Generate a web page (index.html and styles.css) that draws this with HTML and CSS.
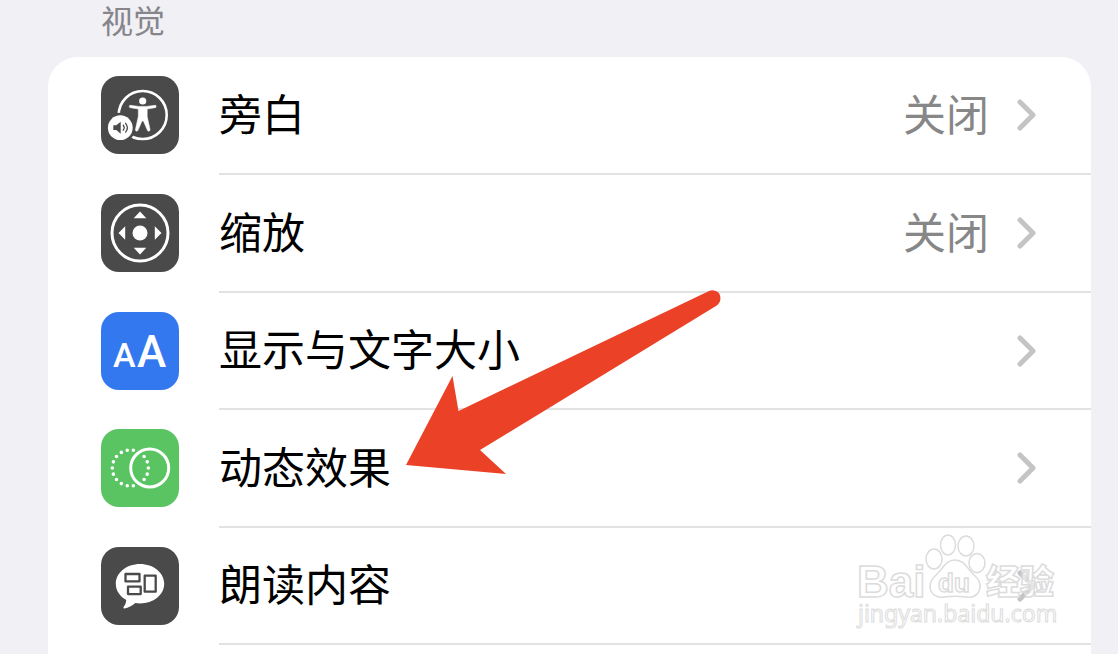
FILE: index.html
```html
<!DOCTYPE html>
<html lang="zh-CN">
<head>
<meta charset="utf-8">
<title>辅助功能</title>
<link rel="stylesheet" href="styles.css">
</head>
<body>
<main class="page">
  <h2 class="section-title">视觉</h2>
  <nav class="card">
    <a class="row" href="#voiceover">
      <svg class="icon icon-dark" viewBox="0 0 78 78" aria-hidden="true">
        <circle cx="41.7" cy="39" r="24" fill="none" stroke="#fff" stroke-width="2.6"/>
        <circle cx="19.3" cy="51.7" r="15" fill="#4a4a4a"/>
        <circle cx="19.3" cy="51.7" r="12.4" fill="#fff"/>
        <path d="M12.3 49.3h3l4.4-3.6v12l-4.4-3.6h-3z" fill="#4a4a4a"/>
        <path d="M22.2 49.2q2 2.5 0 5M24.6 47.3q3.6 4.4 0 8.8" fill="none" stroke="#4a4a4a" stroke-width="1.3" stroke-linecap="round"/>
        <circle cx="41.7" cy="25" r="3.6" fill="#fff"/>
        <path d="M29.3 29.3 38 30.4h7.4l8.7-1.1q1.2.1 1.1 1.2t-1 1.2l-8 1.3v7.6l2.9 13q0 1.5-1.3 1.6t-1.5-1.1L42.4 45h-1.4L37.1 54.100q-.5 1.2-1.6 1.1t-1.1-1.6l2.9-13V33l-8-1.3q-1-.2-1-1.3t1-1.1z" fill="#fff" stroke="#fff" stroke-width=".5"/>
      </svg>
      <span class="body"><span class="label">旁白</span><span class="value">关闭</span>
      <svg class="chevron" viewBox="0 0 20 32" aria-hidden="true"><path d="M3 3 16 16 3 29"/></svg></span>
    </a>
    <a class="row" href="#zoom">
      <svg class="icon icon-dark" viewBox="0 0 78 78" aria-hidden="true">
        <circle cx="39" cy="39" r="28" fill="none" stroke="#fff" stroke-width="3"/>
        <circle cx="39" cy="39" r="7.5" fill="#fff"/>
        <path d="M39 17.500 45.300 24.200H32.700zM39 60.500 32.700 53.800h12.600zM17.500 39 24.200 32.300v13.400zM60.500 39 53.800 32.300v13.400z" fill="#fff"/>
      </svg>
      <span class="body"><span class="label">缩放</span><span class="value">关闭</span>
      <svg class="chevron" viewBox="0 0 20 32" aria-hidden="true"><path d="M3 3 16 16 3 29"/></svg></span>
    </a>
    <a class="row" href="#display">
      <svg class="icon icon-blue" viewBox="0 0 78 78" aria-hidden="true">
        <text class="glyph glyph-small" x="12" y="55">A</text>
        <text class="glyph glyph-large" x="36" y="55">A</text>
      </svg>
      <span class="body"><span class="label">显示与文字大小</span>
      <svg class="chevron" viewBox="0 0 20 32" aria-hidden="true"><path d="M3 3 16 16 3 29"/></svg></span>
    </a>
    <a class="row" href="#motion">
      <svg class="icon icon-green" viewBox="0 0 78 78" fill="none" aria-hidden="true">
        <circle cx="29.3" cy="39" r="18" stroke="#fff" stroke-width="3.6" stroke-linecap="round" pathLength="18" stroke-dasharray="0 1"/>
        <circle cx="48.7" cy="39" r="19" stroke="#5ac463" stroke-width="6"/>
        <circle cx="48.7" cy="39" r="19" stroke="#fff" stroke-width="3"/>
      </svg>
      <span class="body"><span class="label">动态效果</span>
      <svg class="chevron" viewBox="0 0 20 32" aria-hidden="true"><path d="M3 3 16 16 3 29"/></svg></span>
    </a>
    <a class="row" href="#spoken">
      <svg class="icon icon-dark" viewBox="0 0 78 78" aria-hidden="true">
        <path d="M39 17c13.500 0 24.200 8.700 24.200 19.800S52.500 56.500 39 56.500q-2.500 0-4.700-.4-5 4.400-10.800 5.400-1.700 0-.9-1.500 2.500-3.500 2.700-7C18.800 49.500 14.800 43.600 14.800 36.800 14.800 25.700 25.500 17 39 17z" fill="#fff"/>
        <g fill="#fff" stroke="#4a4a4a" stroke-width="2.3" stroke-linejoin="round">
          <rect x="24.500" y="27" width="14" height="7.400"/>
          <rect x="27" y="39.700" width="12.700" height="7.400"/>
          <rect x="43.700" y="28.700" width="11" height="16"/>
        </g>
      </svg>
      <span class="body"><span class="label">朗读内容</span>
      <svg class="chevron" viewBox="0 0 20 32" aria-hidden="true"><path d="M3 3 16 16 3 29"/></svg></span>
    </a>
  </nav>

  <svg class="arrow" viewBox="0 0 316 186" aria-hidden="true">
    <path d="M1 176 47.500 87 53.500 122 303 2.500Q309-.5 314 4 318 12 311 17L75 161 101 185z" fill="#eb4127"/>
  </svg>

  <svg class="watermark" viewBox="0 0 206 104" role="img" aria-label="Baidu 经验 jingyan.baidu.com">
    <g class="outline">
      <ellipse cx="79" cy="29" rx="8" ry="10"/>
      <ellipse cx="93" cy="15" rx="7.500" ry="10"/>
      <ellipse cx="111" cy="16" rx="8" ry="10"/>
      <ellipse cx="122" cy="33" rx="8" ry="9.500"/>
      <path d="M100 30c9 0 12 8 18 14 6 5 8 9 7 14-2 8-8 10-14 9-7-1-14-1-22 0-7 1-13-2-14-10 0-6 3-9 8-14 6-6 8-13 17-13z"/>
      <text class="mark-latin" x="2" y="67">Bai</text>
      <text class="mark-du" x="83" y="62">du</text>
      <text class="mark-cjk" x="131" y="64">经验</text>
      <text class="mark-url" x="3" y="92">jingyan.baidu.com</text>
    </g>
  </svg>
</main>
</body>
</html>
```
FILE: styles.css
```css
* {
  box-sizing: border-box;
}

body {
  margin: 0;
  background: #f1f0f5;
  color: #000;
  font-family: "Noto Sans CJK SC", sans-serif;
}

.page {
  position: relative;
  display: flex;
  flex-direction: column;
  min-height: 100vh;
  padding: 0 27px 0 48px;
  overflow: hidden;
}

.section-title {
  margin: 0;
  padding: 0 53px 19px;
  color: #85858a;
  font-size: 32px;
  font-weight: 400;
  line-height: 38px;
}

.card {
  flex: 1;
  background: #fff;
  border-radius: 30px 30px 0 0;
}

.row {
  display: flex;
  align-items: stretch;
  gap: 40px;
  min-height: 118px;
  padding-left: 53px;
  color: inherit;
  text-decoration: none;
}

.row:nth-child(3),
.row:nth-child(5) {
  min-height: 117px;
}

.icon {
  flex: none;
  width: 78px;
  height: 78px;
  margin: 19px 0;
  border-radius: 18px;
}

.icon-dark {
  background: #4a4a4a;
}

.icon-blue {
  background: #3478f0;
}

.icon-green {
  background: #5ac463;
}

.glyph {
  fill: #fff;
  font-family: Roboto, sans-serif;
  font-weight: 500;
}

.glyph-small {
  font-size: 34px;
}

.glyph-large {
  font-size: 44px;
}

.body {
  flex: 1;
  display: flex;
  align-items: center;
  padding-right: 54px;
  border-bottom: 2px solid #e2e2e3;
  font-size: 43px;
  line-height: 60px;
}

.label,
.value {
  padding-bottom: 7px;
}

.label {
  flex: 1;
}

.value {
  color: #878787;
}

.chevron {
  flex: none;
  width: 20px;
  height: 32px;
  margin-left: 28px;
  fill: none;
  stroke: #c4c4c6;
  stroke-width: 5;
  stroke-linecap: round;
  stroke-linejoin: round;
}

.arrow {
  position: absolute;
  top: 289px;
  left: 405px;
  width: 316px;
  height: 186px;
}

.watermark {
  position: absolute;
  top: 530px;
  right: 57px;
  width: 206px;
  height: 104px;
}

.outline {
  fill: rgba(255, 255, 255, 0.6);
  stroke: #dcdcdc;
  stroke-width: 1.5px;
}

.mark-latin,
.mark-du {
  font-family: "Liberation Sans", sans-serif;
  font-weight: 700;
}

.mark-latin {
  font-size: 44px;
}

.mark-du {
  font-size: 26px;
}

.mark-cjk {
  font-size: 34px;
  font-weight: 900;
}

.mark-url {
  font-family: "Noto Sans", sans-serif;
  font-size: 23px;
  stroke-width: 1px;
}
```
